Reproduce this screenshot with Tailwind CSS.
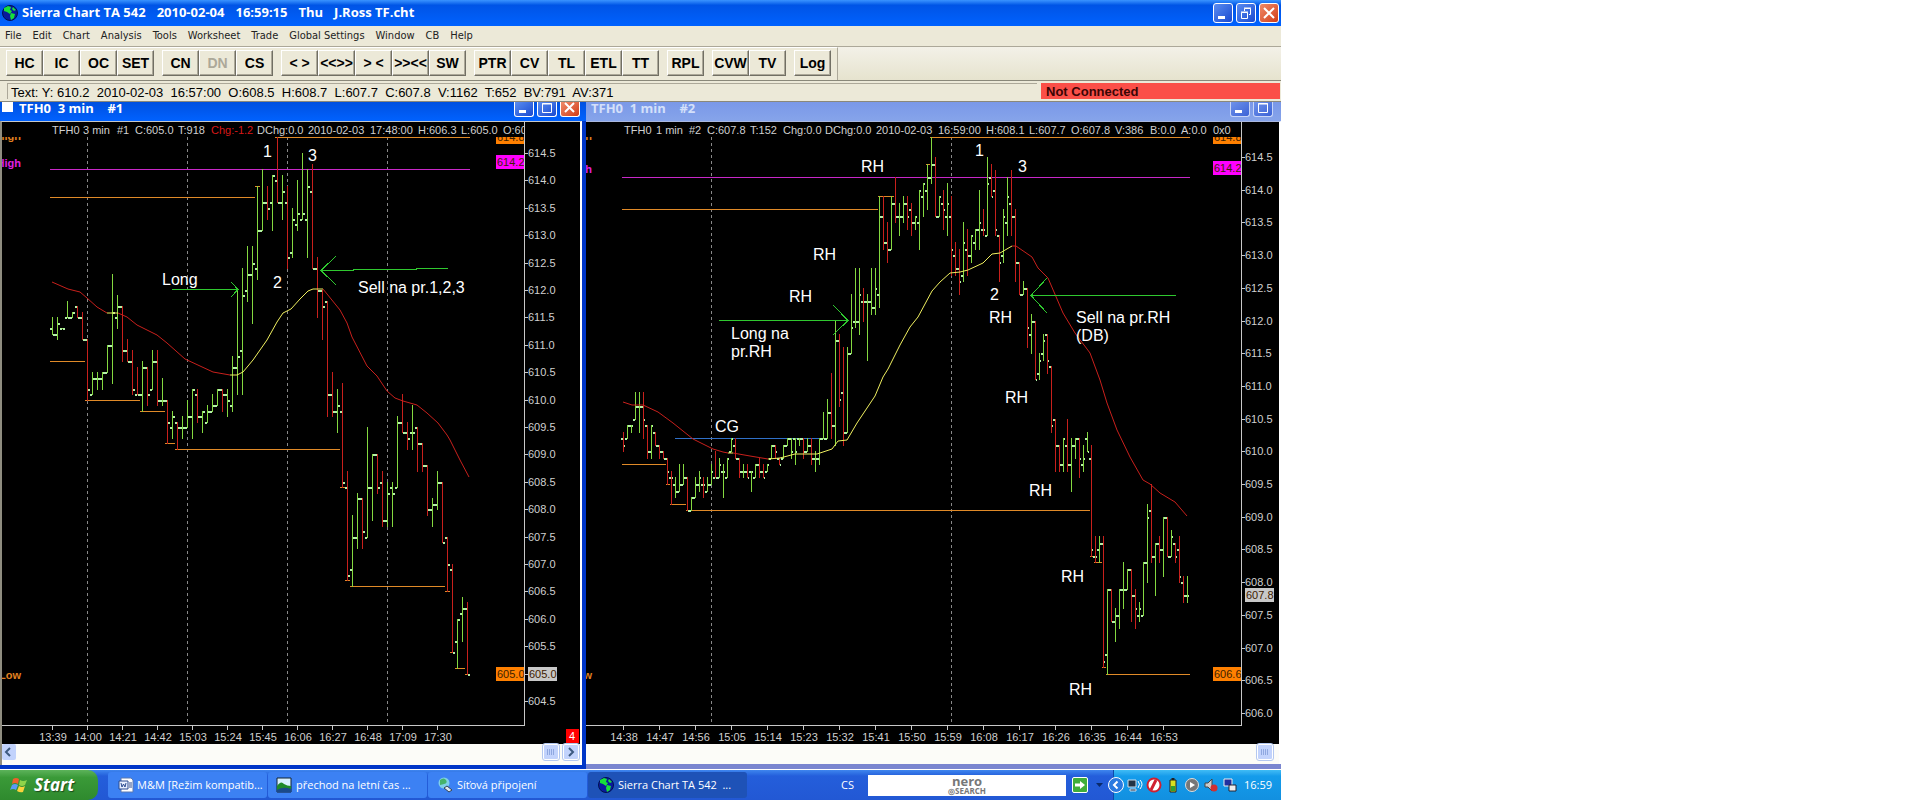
<!DOCTYPE html>
<html lang="cs">
  <head>
    <meta charset="UTF-8" />
    <meta name="viewport" content="width=device-width, initial-scale=1.0" />
    <script src="https://cdn.jsdelivr.net/npm/@tailwindcss/browser@4"></script>
    <title>Sierra Chart TA 542</title>
  </head>
  <body class="bg-white font-['Liberation_Sans',sans-serif]">
    <div class="flex flex-col h-screen w-[67%] min-w-[1200px] overflow-hidden bg-[#ece9d8]">
      <!-- title bar -->
      <header class="flex items-center h-[26px] shrink-0 px-[2px] gap-[3px] bg-linear-to-b from-[#3a93ff] via-[#0054e6] via-20% to-[#0062ff]">
        <svg class="w-4 h-4" viewBox="0 0 16 16">
          <circle cx="8" cy="8" r="7.5" fill="#0a1a9c" stroke="#001050" />
          <path d="M2 3L6 1l3 1-1 3 2 1-2 3-3-2-3-1zM9 8l4 1-1 4-3 2-1-4zM11 2l3 3-2 1-2-2z" fill="#17e03a" />
        </svg>
        <h1 class="flex grow gap-[11px] pl-px text-[13px] font-bold text-white font-['Open_Sans',sans-serif]">
          <span>Sierra Chart TA 542</span>
          <span>2010-02-04</span>
          <span>16:59:15</span>
          <span>Thu</span>
          <span>J.Ross TF.cht</span>
        </h1>
        <button aria-label="Minimize" class="w-5 h-5 rounded-[3px] border border-white bg-linear-to-br from-[#5b8cf0] to-[#1a48d0]">
          <svg viewBox="0 0 18 18"><path d="M4 12h7v3H4z" fill="#fff" /></svg>
        </button>
        <button aria-label="Restore" class="w-5 h-5 rounded-[3px] border border-white bg-linear-to-br from-[#5b8cf0] to-[#1a48d0]">
          <svg viewBox="0 0 18 18" fill="none" stroke="#fff"><path d="M4.500 8.500h6v6h-6zM4 8h7M7.500 7V4.500h6v6H12M7 4h7" /></svg>
        </button>
        <button aria-label="Close" class="w-5 h-5 rounded-[3px] border border-white bg-linear-to-br from-[#f08a68] to-[#d03a10]">
          <svg viewBox="0 0 18 18"><path d="M4 4l10 10M14 4L4 14" stroke="#fff" stroke-width="2" /></svg>
        </button>
      </header>

      <!-- menu -->
      <nav class="flex items-center h-5 shrink-0 pl-[5px] gap-[11px] text-[11px] text-[#222] font-['DejaVu_Sans_Condensed','DejaVu_Sans',sans-serif]">
        <a href="#">File</a>
        <a href="#">Edit</a>
        <a href="#">Chart</a>
        <a href="#">Analysis</a>
        <a href="#">Tools</a>
        <a href="#">Worksheet</a>
        <a href="#">Trade</a>
        <a href="#">Global Settings</a>
        <a href="#">Window</a>
        <a href="#">CB</a>
        <a href="#">Help</a>
      </nav>

      <!-- toolbar, filled below -->
      <div class="h-[34px] shrink-0 border-t border-[#aca899] bg-linear-to-b from-[#f3f1e8] to-[#e6e3ce]">
        <div id="toolbar" class="flex items-start gap-2 w-[838px] h-full pt-[2px] pl-[6px] border-t border-white border-r border-r-[#aca899] bg-[#ece9d8]"></div>
      </div>

      <!-- status line -->
      <div class="flex h-[22px] shrink-0 pt-[2px] pb-[2px] pl-[7px] pr-px gap-1 border-t border-b border-[#8a887a] text-[13px]">
        <p class="grow pl-[3px] leading-[17px] border-t border-l border-[#aca899] whitespace-pre">Text: Y: 610.2  2010-02-03  16:57:00  O:608.5  H:608.7  L:607.7  C:607.8  V:1162  T:652  BV:791  AV:371</p>
        <p class="w-[239px] pl-[5px] leading-[17px] bg-[#fb4f48] text-[#3a0505] font-bold">Not Connected</p>
      </div>

      <!-- chart windows -->
      <main class="flex grow min-h-0">
        <section class="flex flex-col w-[586px] shrink-0 bg-[#0036c8]">
          <div class="flex h-[19px] shrink-0 pl-[2px] pr-[6px] bg-linear-to-b from-[#0050e0] to-[#0062ff]">
            <span class="w-[11px] h-[10px] bg-white"></span>
            <h2 class="grow pl-[6px] text-[13px] leading-[12px] font-bold text-white whitespace-pre font-['Open_Sans',sans-serif]">TFH0  3 min    #1</h2>
            <div class="flex gap-[3px] h-[15px]">
              <button aria-label="Minimize chart 1" class="w-5 rounded-b-[3px] border border-t-0 border-white bg-linear-to-br from-[#5b8cf0] to-[#1a48d0]">
                <svg viewBox="0 0 18 14"><path d="M4 8h7v3H4z" fill="#fff" /></svg>
              </button>
              <button aria-label="Maximize chart 1" class="w-5 rounded-b-[3px] border border-t-0 border-white bg-linear-to-br from-[#5b8cf0] to-[#1a48d0]">
                <svg viewBox="0 0 18 14"><path d="M4.500 1.500h9v9h-9zM4 2h10" fill="none" stroke="#fff" /></svg>
              </button>
              <button aria-label="Close chart 1" class="w-5 rounded-b-[3px] border border-t-0 border-white bg-linear-to-br from-[#f08a68] to-[#d03a10]">
                <svg viewBox="0 0 18 14"><path d="M4 1l9 9M13 1L4 10" stroke="#fff" stroke-width="2" /></svg>
              </button>
            </div>
          </div>
          <div class="flex flex-col grow min-h-0 mr-[4px] mb-[4px] border-l-2 border-r-2 border-t border-l-[#8f8d80] border-r-white border-t-[#c8c8c8] bg-[#fcfcf8]">
            <svg id="chart1" class="w-full grow min-h-0 bg-black" font-size="11" fill="#d0d0d0" shape-rendering="crispEdges"></svg>
            <div class="flex justify-between h-[21px] shrink-0 pb-[5px] pr-px">
              <button aria-label="Scroll left" class="w-[14px] rounded-[2px] bg-[#c2d3fc]">
                <svg viewBox="0 0 14 16"><path d="M8 4L4 8l4 4" fill="none" stroke="#3d5a80" stroke-width="2" /></svg>
              </button>
              <div class="flex gap-1">
                <button aria-label="Thumb" class="w-4 rounded-[2px] border border-white outline outline-[#b4c8f0] bg-[#c2d3fc]">
                  <svg viewBox="0 0 14 14"><path d="M3.500 4v6M5.500 4v6M7.500 4v6M9.500 4v6" stroke="#8fa8e0" /></svg>
                </button>
                <button aria-label="Scroll right" class="w-4 rounded-[2px] border border-white outline outline-[#b4c8f0] bg-[#c2d3fc]">
                  <svg viewBox="0 0 14 14"><path d="M5 3l4 4-4 4" fill="none" stroke="#3d5a80" stroke-width="2" /></svg>
                </button>
              </div>
            </div>
          </div>
        </section>

        <section class="flex flex-col grow min-w-0 bg-[#7a86d0]">
          <div class="flex h-[19px] shrink-0 pr-[8px] bg-linear-to-b from-[#7a98e8] to-[#86a4ea]">
            <h2 class="grow pl-[5px] text-[13px] leading-[12px] font-bold text-[#d4e0fa] whitespace-pre font-['Open_Sans',sans-serif]">TFH0  1 min    #2</h2>
            <div class="flex gap-[3px] h-[15px]">
              <button aria-label="Minimize chart 2" class="w-5 rounded-b-[3px] border border-t-0 border-[#c8d6f8] bg-linear-to-br from-[#6f92ea] to-[#3c62d6]">
                <svg viewBox="0 0 18 14"><path d="M4 8h7v3H4z" fill="#fff" /></svg>
              </button>
              <button aria-label="Maximize chart 2" class="w-5 rounded-b-[3px] border border-t-0 border-[#c8d6f8] bg-linear-to-br from-[#6f92ea] to-[#3c62d6]">
                <svg viewBox="0 0 18 14"><path d="M4.500 1.500h9v9h-9zM4 2h10" fill="none" stroke="#fff" /></svg>
              </button>
            </div>
          </div>
          <div class="flex flex-col grow min-h-0 mb-[5px] border-t border-[#aab8e0] border-r-2 border-r-white bg-[#fcfcf8]">
            <svg id="chart2" class="w-full grow min-h-0 bg-black" font-size="11" fill="#d0d0d0" shape-rendering="crispEdges"></svg>
            <div class="flex justify-end h-5 shrink-0 pb-1 pr-[6px]">
              <button aria-label="Thumb 2" class="w-4 rounded-[2px] border border-white outline outline-[#b4c8f0] bg-[#c2d3fc]">
                <svg viewBox="0 0 14 14"><path d="M3.500 4v6M5.500 4v6M7.500 4v6M9.500 4v6" stroke="#8fa8e0" /></svg>
              </button>
            </div>
          </div>
        </section>
      </main>

      <!-- taskbar -->
      <footer class="flex items-center h-[31px] shrink-0 border-t border-white bg-linear-to-b from-[#3f86ee] via-[#245edb] via-20% to-[#2258d4] text-[11px] text-white whitespace-nowrap font-['Open_Sans',sans-serif]">
        <button class="flex items-center gap-1 w-[98px] h-full pl-[10px] mr-[10px] rounded-r-[10px] bg-linear-to-b from-[#5cb35a] via-[#3a9a38] via-25% to-[#2f8a2e] text-[17px] font-bold italic">
          <svg class="w-5 h-5" viewBox="0 0 20 20">
            <path d="M3 4q3-2 6 0L8 9Q5 7 2 9z" fill="#f0602c" />
            <path d="M10 5q3 2 7 0l-2 5q-3 2-6 0z" fill="#8fd44a" />
            <path d="M2 10q3-2 6 0l-2 5q-3-2-6 0z" fill="#5a9af5" />
            <path d="M9 11q3 2 6 0l-2 6q-3 1-6-1z" fill="#fbd23c" />
          </svg>
          <span class="leading-6 [text-shadow:1px_1px_1px_#1a4a1a]">Start</span>
        </button>
        <button class="flex items-center gap-[3px] w-[159px] h-[26px] pl-[10px] mr-px rounded-[3px] bg-[#3c81f3]">
          <svg class="w-4 h-4" viewBox="0 0 16 16">
            <path d="M3 1h10l2 2v12H3z" fill="#fff" stroke="#5a78b0" />
            <path d="M1 4h9v8H1z" fill="#e8f0ff" stroke="#2a4a90" />
            <path d="M3 6l1 4 1.500-3L7 10l1-4M11 6h3M11 8h3M11 10h3" fill="none" stroke="#2a4a90" />
          </svg>
          M&amp;M [Režim kompatib...
        </button>
        <button class="flex items-center gap-1 w-[159px] h-[26px] pl-[8px] mr-px rounded-[3px] bg-[#3c81f3]">
          <svg class="w-4 h-4" viewBox="0 0 16 16">
            <path d="M1 1h14v14H1z" fill="#d8f0ff" stroke="#123" />
            <path d="M1 9q4-6 7-2 3 2 7 2v6H1z" fill="#1f8a2a" />
            <path d="M1 13q6-4 14-1v3H1z" fill="#1a4a8a" />
          </svg>
          přechod na letní čas ...
        </button>
        <button class="flex items-center gap-1 w-[159px] h-[26px] pl-[9px] mr-px rounded-[3px] bg-[#3c81f3]">
          <svg class="w-4 h-4" viewBox="0 0 16 16">
            <circle cx="7" cy="6" r="5.500" fill="#7fd0e8" />
            <path d="M3 3q4-3 6 0t-2 4-4 1z" fill="#45b36a" />
            <path d="M7 11l3-2 5 4-3 2z" fill="#dfe6f0" stroke="#345" />
          </svg>
          Síťová připojení
        </button>
        <button class="flex items-center gap-1 w-[159px] h-[26px] pl-[10px] rounded-[3px] bg-[#1e52b7]">
          <svg class="w-4 h-4" viewBox="0 0 16 16">
            <circle cx="8" cy="8" r="7.500" fill="#0a1a9c" stroke="#001050" />
            <path d="M2 3L6 1l3 1-1 3 2 1-2 3-3-2-3-1zM9 8l4 1-1 4-3 2-1-4zM11 2l3 3-2 1-2-2z" fill="#17e03a" />
          </svg>
          Sierra Chart TA 542&nbsp; ...
        </button>
        <span class="grow pr-[14px] text-right">CS</span>
        <div class="relative w-[198px] h-[21px]">
          <input aria-label="Nero Search" class="w-full h-full bg-white" type="text" />
          <div class="absolute inset-0 flex flex-col items-center justify-center pointer-events-none text-[#777] font-bold">
            <span class="text-[13px] leading-[10px]">nero</span>
            <span class="text-[8px] leading-[9px]">◎SEARCH</span>
          </div>
        </div>
        <button aria-label="Search" class="w-4 h-4 ml-[6px] rounded-[2px] bg-[#3fae3a] border border-white">
          <svg viewBox="0 0 14 14"><path d="M2 5.500h5V3l5 4-5 4V8.500H2z" fill="#fff" /></svg>
        </button>
        <svg class="w-[7px] h-[5px] ml-2" viewBox="0 0 7 5"><path d="M0 0h7L3.500 4z" fill="#0a2a6a" /></svg>
        <div class="flex items-center gap-[3px] h-full w-[168px] ml-[10px] border-l border-[#0d4aa8] bg-linear-to-b from-[#3fbcf5] via-[#149ceb] via-20% to-[#1290e0]">
          <button aria-label="Show hidden icons" class="w-4 h-4 -ml-[6px] rounded-full border border-white bg-[#2a7ae0]">
            <svg viewBox="0 0 14 14"><path d="M8.500 3.500L5 7l3.500 3.500" fill="none" stroke="#fff" stroke-width="2" /></svg>
          </button>
          <svg class="w-4 h-4" viewBox="0 0 16 16"><path d="M1 3h8v7H1zM3 12h6v2H3z" fill="#234" stroke="#cde" /><path d="M11 4q3 3 0 7M13 3q4 4 0 9" fill="none" stroke="#fff" /></svg>
          <svg class="w-4 h-4" viewBox="0 0 16 16"><circle cx="8" cy="8" r="6.500" fill="#fff" stroke="#d02030" stroke-width="2" /><path d="M10 3L5 13" stroke="#d02030" stroke-width="3" /></svg>
          <svg class="w-4 h-4" viewBox="0 0 16 16"><path d="M5 3h6v12H5z" fill="#d8e020" stroke="#222" /><path d="M6.500 1h3v2h-3z" fill="#222" /><path d="M6 9h4v5H6z" fill="#30a030" /></svg>
          <svg class="w-4 h-4" viewBox="0 0 16 16"><circle cx="8" cy="8" r="6.500" fill="#777" stroke="#ddd" /><path d="M6 5l5 3-5 3z" fill="#fff" /></svg>
          <svg class="w-4 h-4" viewBox="0 0 16 16"><path d="M2 6h3l4-4v12l-4-4H2z" fill="#ccc" stroke="#444" /><circle cx="11" cy="11" r="3.500" fill="#d03030" /></svg>
          <svg class="w-4 h-4" viewBox="0 0 16 16"><path d="M2 2h8v7H2z" fill="#2030a0" stroke="#eee" /><path d="M7 8h7v6H7z" fill="#eee" stroke="#223" /></svg>
          <time class="ml-[3px]">16:59</time>
        </div>
      </footer>
    </div>

    <script>
      const groups = [
        ["HC", "IC", "OC", "SET"],
        ["CN", "DN", "CS"],
        ["< >", "<<>>", "> <", ">><<", "SW"],
        ["PTR", "CV", "TL", "ETL", "TT"],
        ["RPL"],
        ["CVW", "TV"],
        ["Log"],
      ];
      const toolbar = document.getElementById("toolbar");
      groups.forEach((names) => {
        const group = document.createElement("div");
        group.className = "flex";
        names.forEach((name) => {
          const button = document.createElement("button");
          button.textContent = name;
          button.disabled = name === "DN";
          button.className =
            "w-[37px] h-[26px] text-[14px] font-bold whitespace-nowrap border border-t-white border-l-white border-r-[#716f64] border-b-[#716f64] shadow-[inset_-1px_-1px_#aca899] disabled:text-[#aca899]";
          group.appendChild(button);
        });
        toolbar.appendChild(group);
      });

      // bars: high, low, open, close in tenths above 600, then g(reen) or r(ed)
      const bars1 = `115 112 113 112 g,115 111 112 114 g,113 113 113 113 g,118 115 115 115 g,116 115 115 116 g,117 115 117 115 r,116 111 115 111 r,
111 100 111 102 r,105 101 101 104 g,105 102 104 104 g,105 102 104 105 g,110 105 105 110 g,123 103 110 116 g,119 113 115 117 g,117 107 117 109 r,
111 107 109 107 r,109 101 107 102 r,106 101 101 101 r,107 98 101 106 g,106 99 106 101 r,109 102 102 107 g,109 99 107 100 r,104 99 100 100 g,
100 92 100 96 r,98 93 95 97 g,96 91 96 95 r,97 93 95 95 g,100 95 95 97 g,102 93 97 102 g,102 96 101 97 r,98 94 97 98 g,99 96 96 98 g,
101 98 98 99 g,102 99 99 102 g,102 98 102 101 r,102 97 101 100 g,108 98 99 106 g,120 101 106 108 g,124 101 109 119 g,128 118 120 123 g,
128 114 123 125 g,139 122 124 131 g,142 131 131 136 g,139 133 136 135 r,141 131 136 141 g,148 136 140 136 r,141 133 136 138 g,139 124 136 126 r,
135 126 127 133 g,140 131 132 134 g,145 133 133 134 g,142 126 133 139 g,143 124 138 124 r,126 115 124 120 r,120 111 120 117 r,118 97 118 101 r,
105 97 101 98 r,102 94 98 99 g,103 84 98 85 r,87 67 84 68 r,79 66 69 75 g,83 73 75 82 g,82 73 82 76 r,95 75 75 84 g,90 78 84 90 g,90 83 90 84 r,
87 77 85 78 r,85 77 78 83 g,85 77 84 83 g,97 84 84 96 g,101 94 96 94 r,96 91 94 93 r,99 91 94 94 g,95 87 95 92 r,92 87 92 88 r,88 79 88 80 r,
82 77 80 81 g,87 80 81 85 g,85 74 85 74 r,75 65 75 70 r,70 54 69 54 r,60 51 56 60 g,64 56 61 62 g,63 50 62 50 r`;
      const bars2 = `103 100 102 101 r,104 102 102 104 g,104 103 104 104 g,109 105 105 107 g,109 103 107 107 g,109 102 107 105 r,104 99 104 100 r,
104 99 100 104 g,103 101 103 101 r,101 99 101 100 r,100 99 100 99 r,99 95 99 97 r,97 92 96 96 r,96 93 95 94 g,98 94 94 95 g,98 95 95 96 g,
96 91 96 91 r,93 91 91 93 g,96 93 93 95 g,97 94 95 96 g,96 93 95 95 r,96 94 94 95 g,98 95 95 97 g,100 96 96 96 r,99 96 96 98 g,98 93 97 97 g,
99 96 96 99 g,102 100 100 102 g,102 99 101 99 r,99 96 99 97 r,98 96 97 97 g,98 96 97 96 r,97 94 97 97 g,98 96 96 98 g,99 96 98 97 r,98 96 97 96 r,
98 97 97 98 g,101 99 99 101 g,101 99 101 100 r,99 98 99 98 r,101 99 99 101 g,102 101 101 102 g,102 99 102 100 g,102 98 102 100 g,102 101 102 102 g,
102 99 102 100 r,102 100 100 101 g,102 98 101 99 r,100 97 99 99 g,102 98 99 102 g,106 102 102 102 g,108 102 102 106 g,112 102 106 104 r,
120 101 104 117 g,118 107 117 108 r,116 101 109 103 r,116 103 103 115 g,124 115 115 119 g,128 119 120 120 g,128 118 120 124 g,125 120 123 123 r,
124 114 123 123 g,128 121 123 122 g,128 121 122 125 g,139 122 124 136 g,139 131 136 132 r,135 129 132 131 r,139 131 131 138 g,142 135 138 136 r,
138 133 136 136 g,139 135 136 138 g,139 134 138 136 r,138 133 137 135 r,136 134 135 136 g,140 131 135 140 g,141 136 139 141 g,144 137 140 142 g,
148 141 142 144 g,145 136 144 136 r,139 136 136 139 g,140 134 138 137 r,141 133 136 138 g,139 127 136 131 r,132 127 130 128 r,131 124 128 126 r,
135 126 127 132 g,134 127 131 130 r,133 129 130 133 g,134 131 132 134 g,140 131 134 135 g,137 133 134 134 r,145 133 133 141 g,144 139 142 139 r,
143 133 140 134 r,133 126 133 129 r,137 129 130 136 g,142 133 135 139 g,143 133 138 136 r,137 126 136 129 r,129 124 129 124 r,126 124 124 125 g,
125 116 125 119 r,121 115 118 120 g,120 111 120 111 r,115 111 112 114 g,118 114 115 117 g,118 112 118 114 r,113 103 113 104 r,105 97 105 101 r,
101 97 101 98 r,102 97 98 102 g,105 97 101 98 r,102 94 98 101 g,102 99 101 102 g,102 96 102 99 r,101 97 98 99 g,103 100 102 100 g,101 84 99 85 r,
87 83 84 84 r,87 83 85 86 g,87 67 86 68 r,79 66 69 79 g,79 74 79 74 r,76 71 74 75 g,79 73 75 79 g,83 76 79 79 g,82 79 79 82 g,82 74 82 78 r,
79 73 78 76 r,77 74 75 76 g,83 75 75 83 g,92 80 83 90 g,95 83 91 84 r,86 78 84 86 g,87 83 86 85 r,90 81 85 90 g,90 84 90 84 r,88 84 84 87 g,
86 83 86 84 r,87 80 85 81 r,81 77 80 78 r,81 77 78 78 g`;

      const RED = "#c8201c", YELLOW = "#f0f060", ORANGE = "#e08a28", GREEN = "#2fc82f";

      // x values are measured from the left edge of the desktop, y from its top
      function drawChart(c) {
        const y = (t) => Math.round(c.top + (145 - t) * c.step);
        let s = "";
        const rect = (x, yy, w, h, fill) => (s += `<rect x="${x}" y="${yy}" width="${w}" height="${h}" fill="${fill}"/>`);
        const text = (x, yy, str, attrs = "") => (s += `<text x="${x}" y="${yy}" ${attrs}>${str}</text>`);
        const line = (pts, color, extra = "") => (s += `<polyline points="${pts}" fill="none" stroke="${color}" ${extra}/>`);

        c.dashes.forEach((x) => line(`${x}.5,137 ${x}.5,723`, "#888", 'stroke-dasharray="3 3"'));
        c.levels.forEach(([x1, x2, t]) => rect(x1, y(t), x2 - x1, 1, ORANGE));
        rect(c.high[0], y(142), c.high[1] - c.high[0], 1, "#c828c8");
        if (c.blue) rect(c.blue[0], y(102), c.blue[1] - c.blue[0], 1, "#3070c8");

        c.bars.split(",").forEach((bar, i) => {
          const [h, l, o, cl, dir] = bar.trim().split(" ");
          const x = c.first + i * c.gap;
          rect(x, y(h), 1, y(l) - y(h) + 1, dir === "g" ? "#84d840" : RED);
          rect(x - 2, y(o), 2, 2, "#b4f0a8");
          rect(x + 1, y(cl), c.tick, 2, "#b4f0a8");
        });
        c.average.forEach(([color, pts]) => line(pts, color, 'shape-rendering="auto"'));
        c.arrows.forEach((pts) => line(pts, GREEN));

        // axes
        rect(c.left, 725, c.axis - c.left + 1, 1, "#c8c8c8");
        rect(c.axis, 122, 1, 604, "#c8c8c8");
        for (let t = 145; t >= c.lowest; t -= 5) {
          rect(c.axis, y(t), 4, 1, "#c8c8c8");
          text(c.axis + 4, y(t) + 4, (600 + t / 10).toFixed(1));
        }
        c.times.forEach((time, i) => {
          const x = c.first + i * c.timeGap;
          rect(x, 725, 1, 5, "#c8c8c8");
          text(x + 1, 741, time, 'text-anchor="middle"');
        });

        c.boxes.forEach(([x, yy, h, fill, label]) => {
          s += `<svg x="${x}" y="${yy}" width="${x > c.axis ? 29 : 28}" height="${h}">
            <rect width="29" height="14" fill="${fill}"/>
            <text x="1" y="${h < 14 ? 4 : 11}" fill="#402000">${label}</text></svg>`;
        });
        c.side.forEach(([yy, fill, label, clip]) => {
          s += `<svg x="${c.left}" y="${yy}" width="20" height="${clip}"><text x="${c.sideEnd}" y="${clip < 10 ? 3 : 11}" text-anchor="end" font-weight="bold" fill="${fill}">${label}</text></svg>`;
        });
        s += `<svg x="0" y="0" width="${c.axis}" height="140">`;
        c.header.forEach(([x, str]) => text(x, 134, str, str.startsWith("Chg:-") ? 'fill="#d81818"' : ""));
        s += "</svg>";
        c.notes.forEach(([x, yy, str]) => text(x, yy, str, 'font-size="16" fill="#fff"'));
        if (c.badge) {
          rect(566, 729, 13, 14, "#f00");
          text(569, 740, "4", 'fill="#fff"');
        }
        document.getElementById(c.id).innerHTML = `<g transform="translate(${-c.left} -122)">${s}</g>`;
      }

      drawChart({
        id: "chart1", left: 2, top: 153, step: 5.48, first: 52, gap: 5, tick: 2, axis: 524, lowest: 45, bars: bars1,
        dashes: [87, 187, 287, 387],
        high: [50, 470],
        levels: [[50, 255, 137], [255, 260, 139], [275, 470, 148], [50, 85, 107], [85, 140, 100], [140, 165, 98], [165, 175, 92], [175, 340, 91],
          [340, 345, 84], [345, 350, 67], [350, 445, 66], [445, 450, 65], [450, 455, 54], [455, 465, 51], [465, 470, 50]],
        average: [
          [RED, "52,282 68,289 80,292 87,298 97,307 107,313"],
          [YELLOW, "107,313 118,313"],
          [RED, "118,313 127,317 137,325 157,335 167,343 185,359 200,366 213,372 230,375"],
          [YELLOW, "230,375 237,375 243,372 253,360 267,340 277,322 283,313 291,309 300,299 308,291 313,289 323,289"],
          [RED, "323,289 340,310 347,323 352,337 367,366 377,376 387,391 395,398 403,401 417,405 427,413 438,423 447,435 450,440 460,460 469,477"],
        ],
        arrows: ["172,289.500 238,289.500", "231,282 238,289.500 231,297", "321,270.500 353,270.500 353,269.500 416,269.500 416,268.500 448,268.500", "336,256 321,270.500 336,285"],
        times: ["13:39", "14:00", "14:21", "14:42", "15:03", "15:24", "15:45", "16:06", "16:27", "16:48", "17:09", "17:30"], timeGap: 35,
        boxes: [[496, 137, 7, "#ff8000", "614.8"], [496, 155, 14, "#f0f", "614.2"], [496, 667, 14, "#ff8000", "605.0"], [528, 667, 14, "#c8c8c8", "605.0"]],
        side: [[137, "#e08020", "High", 5], [156, "#e020e0", "High", 14], [668, "#e08020", "Low", 13]], sideEnd: 19,
        header: [[52, "TFH0"], [83, "3 min"], [117, "#1"], [135, "C:605.0"], [178, "T:918"], [211, "Chg:-1.2"], [257, "DChg:0.0"], [308, "2010-02-03"],
          [370, "17:48:00"], [418, "H:606.3"], [461, "L:605.0"], [503, "O:60"]],
        notes: [[263, 157, "1"], [308, 161, "3"], [273, 288, "2"], [162, 285, "Long"], [358, 293, "Sell na pr.1,2,3"]],
        badge: true,
      });

      drawChart({
        id: "chart2", left: 586, top: 157, step: 6.54, first: 623, gap: 4, tick: 1, axis: 1241, lowest: 60, bars: bars2,
        dashes: [711, 951],
        high: [622, 1190],
        blue: [675, 820],
        levels: [[622, 878, 137], [878, 894, 139], [926, 930, 144], [930, 1190, 148], [622, 666, 98], [666, 670, 95], [670, 686, 92], [686, 1090, 91],
          [1090, 1094, 84], [1094, 1102, 83], [1102, 1106, 67], [1106, 1190, 66]],
        average: [
          [RED, "623,402 632,405 643,405 658,412 673,423 693,439 713,449 723,452 728,453"],
          [YELLOW, "728,453 733,453"],
          [RED, "733,453 750,456 768,459"],
          [YELLOW, "768,459 780,458 795,454 817,454 832,449 838,441 847,440 857,423 875,396 883,377 888,369 900,345 910,327 918,317 932,291 940,282 950,273 960,272 968,270 983,263 992,254 1000,253 1012,246"],
          [RED, "1012,246 1016,246 1032,257 1038,268 1048,278 1063,313 1075,333 1090,353 1100,380 1107,403 1117,430 1130,457 1143,480 1150,484 1160,493 1175,502 1187,516"],
        ],
        arrows: ["719,320.500 848,320.500", "833,305 848,320.500 833,335", "1031,295.500 1176,295.500", "1047,278 1031,295.500 1047,313"],
        times: ["14:38", "14:47", "14:56", "15:05", "15:14", "15:23", "15:32", "15:41", "15:50", "15:59", "16:08", "16:17", "16:26", "16:35", "16:44", "16:53"], timeGap: 36,
        boxes: [[1213, 137, 7, "#ff8000", "614.8"], [1213, 161, 14, "#f0f", "614.2"], [1213, 667, 14, "#ff8000", "606.6"], [1245, 588, 14, "#c8c8c8", "607.8"]],
        side: [[137, "#e08020", "h", 5], [162, "#e020e0", "h", 14], [668, "#e08020", "w", 13]], sideEnd: 6,
        header: [[624, "TFH0"], [656, "1 min"], [689, "#2"], [707, "C:607.8"], [750, "T:152"], [783, "Chg:0.0"], [825, "DChg:0.0"], [876, "2010-02-03"],
          [938, "16:59:00"], [986, "H:608.1"], [1029, "L:607.7"], [1071, "O:607.8"], [1115, "V:386"], [1150, "B:0.0"], [1181, "A:0.0"], [1213, "0x0"]],
        notes: [[861, 172, "RH"], [813, 260, "RH"], [789, 302, "RH"], [715, 432, "CG"], [731, 339, "Long na"], [731, 357, "pr.RH"], [975, 156, "1"],
          [1018, 172, "3"], [990, 300, "2"], [989, 323, "RH"], [1076, 323, "Sell na pr.RH"], [1076, 341, "(DB)"], [1005, 403, "RH"], [1029, 496, "RH"],
          [1061, 582, "RH"], [1069, 695, "RH"]],
      });
    </script>
  </body>
</html>
